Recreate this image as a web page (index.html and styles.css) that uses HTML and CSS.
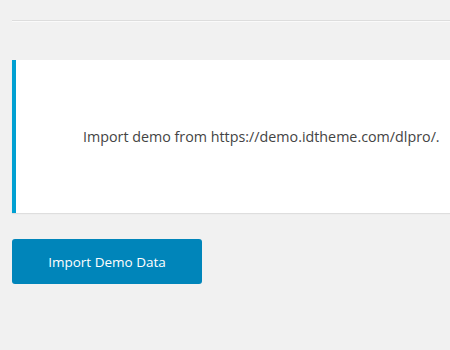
FILE: index.html
```html
<!DOCTYPE html>
<html lang="en">
<head>
    <meta charset="UTF-8">
    <meta name="viewport" content="width=device-width, initial-scale=1.0">
    <title>Import Demo</title>
    <link rel="stylesheet" href="styles.css">
</head>
<body>
    <div class="wrap">
        <hr class="divider">

        <div class="notice">
            <p>Import demo from https://demo.idtheme.com/dlpro/.</p>
        </div>

        <button type="button" class="import-btn">Import Demo Data</button>
    </div>
</body>
</html>
```

FILE: styles.css
```css
:root {
    --page-bg: #f1f1f1;
    --notice-blue: #00a0d2;
    --button-blue: #0085ba;
    --text: #444;
}

* {
    margin: 0;
    padding: 0;
    box-sizing: border-box;
    font-family: 'Open Sans', 'Noto Sans', sans-serif;
}

body {
    background-color: var(--page-bg);
    color: var(--text);
}

.wrap {
    padding: 20px 0 0 12px;
}

.divider {
    border: 0;
    border-top: 1px solid #ddd;
    border-bottom: 1px solid #fafafa;
    margin-bottom: 38px;
}

.notice {
    display: flex;
    align-items: center;
    height: 153px;
    padding-left: 67px;
    background-color: #fff;
    border-left: 4px solid var(--notice-blue);
    box-shadow: 0 1px 1px rgba(0, 0, 0, 0.08);
    font-size: 14.3px;
    white-space: nowrap;
}

.import-btn {
    display: block;
    width: 190px;
    height: 45px;
    margin-top: 26px;
    background-color: var(--button-blue);
    color: #fff;
    border: none;
    border-radius: 3px;
    font-size: 13.5px;
    cursor: pointer;
}
```
